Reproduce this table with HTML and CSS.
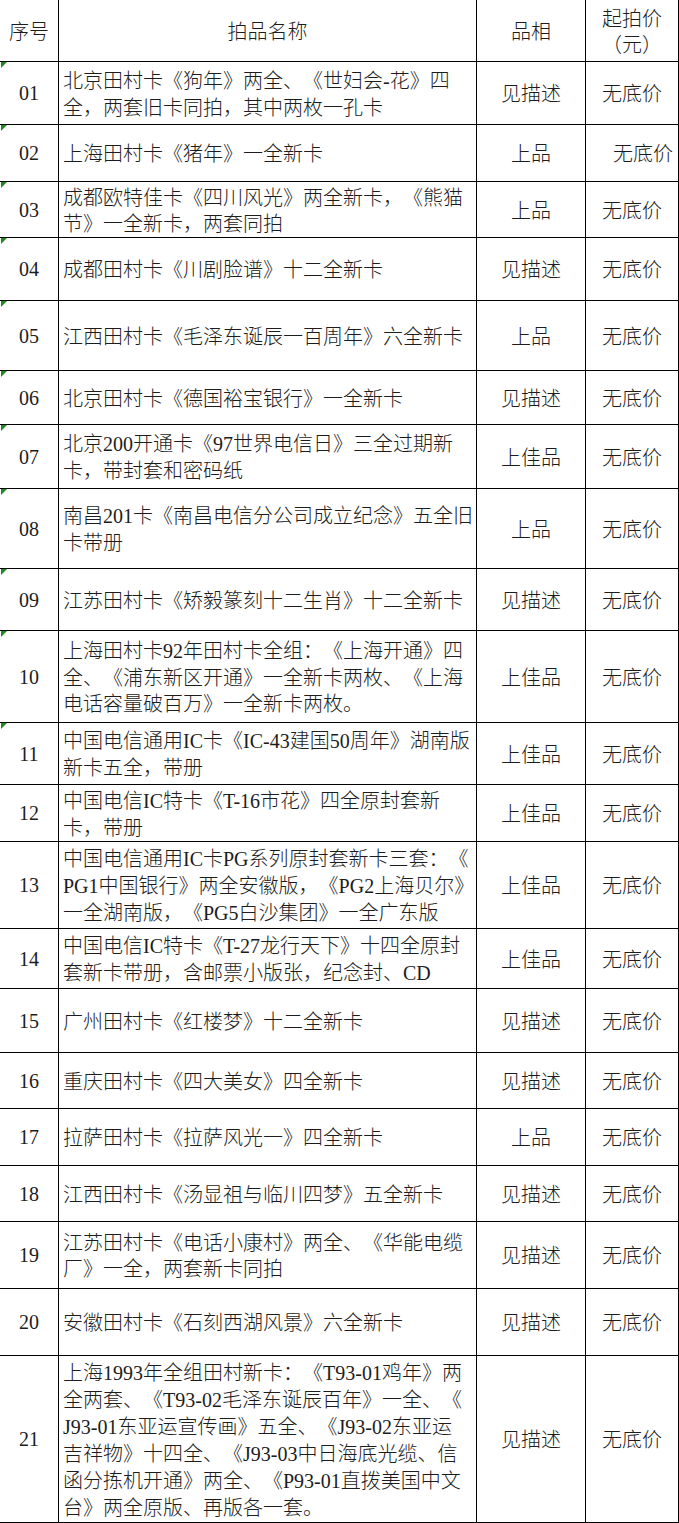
FILE: index.html
```html
<!DOCTYPE html>
<html lang="zh-CN">
<head>
<meta charset="utf-8">
<title>拍品清单</title>
<link rel="stylesheet" href="styles.css">
</head>
<body>
<div class="sheet">
  <div class="row h62 head">
    <div class="cell c-no">序号</div>
    <div class="cell c-name center">拍品名称</div>
    <div class="cell c-grade">品相</div>
    <div class="cell c-price">起拍价<br>（元）</div>
  </div>
  <div class="row h63">
    <div class="cell c-no flag">01</div>
    <div class="cell c-name">北京田村卡《狗年》两全、《世妇会<span class="lat">-</span>花》四<br>全，两套旧卡同拍，其中两枚一孔卡</div>
    <div class="cell c-grade">见描述</div>
    <div class="cell c-price">无底价</div>
  </div>
  <div class="row h57">
    <div class="cell c-no flag">02</div>
    <div class="cell c-name">上海田村卡《猪年》一全新卡</div>
    <div class="cell c-grade">上品</div>
    <div class="cell c-price shifted">无底价</div>
  </div>
  <div class="row h56">
    <div class="cell c-no flag">03</div>
    <div class="cell c-name">成都欧特佳卡《四川风光》两全新卡，《熊猫<br>节》一全新卡，两套同拍</div>
    <div class="cell c-grade">上品</div>
    <div class="cell c-price">无底价</div>
  </div>
  <div class="row h63">
    <div class="cell c-no flag">04</div>
    <div class="cell c-name">成都田村卡《川剧脸谱》十二全新卡</div>
    <div class="cell c-grade">见描述</div>
    <div class="cell c-price">无底价</div>
  </div>
  <div class="row h70">
    <div class="cell c-no flag">05</div>
    <div class="cell c-name">江西田村卡《毛泽东诞辰一百周年》六全新卡</div>
    <div class="cell c-grade">上品</div>
    <div class="cell c-price">无底价</div>
  </div>
  <div class="row h54">
    <div class="cell c-no flag">06</div>
    <div class="cell c-name">北京田村卡《德国裕宝银行》一全新卡</div>
    <div class="cell c-grade">见描述</div>
    <div class="cell c-price">无底价</div>
  </div>
  <div class="row h64">
    <div class="cell c-no flag">07</div>
    <div class="cell c-name">北京<span class="lat">200</span>开通卡《<span class="lat">97</span>世界电信日》三全过期新<br>卡，带封套和密码纸</div>
    <div class="cell c-grade">上佳品</div>
    <div class="cell c-price">无底价</div>
  </div>
  <div class="row h80">
    <div class="cell c-no flag">08</div>
    <div class="cell c-name">南昌<span class="lat">201</span>卡《南昌电信分公司成立纪念》五全旧<br>卡带册</div>
    <div class="cell c-grade">上品</div>
    <div class="cell c-price">无底价</div>
  </div>
  <div class="row h62">
    <div class="cell c-no flag">09</div>
    <div class="cell c-name">江苏田村卡《矫毅篆刻十二生肖》十二全新卡</div>
    <div class="cell c-grade">见描述</div>
    <div class="cell c-price">无底价</div>
  </div>
  <div class="row h92">
    <div class="cell c-no flag">10</div>
    <div class="cell c-name">上海田村卡<span class="lat">92</span>年田村卡全组：《上海开通》四<br>全、《浦东新区开通》一全新卡两枚、《上海<br>电话容量破百万》一全新卡两枚。</div>
    <div class="cell c-grade">上佳品</div>
    <div class="cell c-price">无底价</div>
  </div>
  <div class="row h62">
    <div class="cell c-no flag">11</div>
    <div class="cell c-name">中国电信通用<span class="lat">IC</span>卡《<span class="lat">IC-43</span>建国<span class="lat">50</span>周年》湖南版<br>新卡五全，带册</div>
    <div class="cell c-grade">上佳品</div>
    <div class="cell c-price">无底价</div>
  </div>
  <div class="row h57">
    <div class="cell c-no">12</div>
    <div class="cell c-name">中国电信<span class="lat">IC</span>特卡《<span class="lat">T-16</span>市花》四全原封套新<br>卡，带册</div>
    <div class="cell c-grade">上佳品</div>
    <div class="cell c-price">无底价</div>
  </div>
  <div class="row h87">
    <div class="cell c-no">13</div>
    <div class="cell c-name">中国电信通用<span class="lat">IC</span>卡<span class="lat">PG</span>系列原封套新卡三套：《<br><span class="lat">PG1</span>中国银行》两全安徽版，《<span class="lat">PG2</span>上海贝尔》<br>一全湖南版，《<span class="lat">PG5</span>白沙集团》一全广东版</div>
    <div class="cell c-grade">上佳品</div>
    <div class="cell c-price">无底价</div>
  </div>
  <div class="row h60">
    <div class="cell c-no">14</div>
    <div class="cell c-name">中国电信<span class="lat">IC</span>特卡《<span class="lat">T-27</span>龙行天下》十四全原封<br>套新卡带册，含邮票小版张，纪念封、<span class="lat">CD</span></div>
    <div class="cell c-grade">上佳品</div>
    <div class="cell c-price">无底价</div>
  </div>
  <div class="row h64">
    <div class="cell c-no">15</div>
    <div class="cell c-name">广州田村卡《红楼梦》十二全新卡</div>
    <div class="cell c-grade">见描述</div>
    <div class="cell c-price">无底价</div>
  </div>
  <div class="row h56">
    <div class="cell c-no">16</div>
    <div class="cell c-name">重庆田村卡《四大美女》四全新卡</div>
    <div class="cell c-grade">见描述</div>
    <div class="cell c-price">无底价</div>
  </div>
  <div class="row h57">
    <div class="cell c-no">17</div>
    <div class="cell c-name">拉萨田村卡《拉萨风光一》四全新卡</div>
    <div class="cell c-grade">上品</div>
    <div class="cell c-price">无底价</div>
  </div>
  <div class="row h56">
    <div class="cell c-no">18</div>
    <div class="cell c-name">江西田村卡《汤显祖与临川四梦》五全新卡</div>
    <div class="cell c-grade">见描述</div>
    <div class="cell c-price">无底价</div>
  </div>
  <div class="row h67">
    <div class="cell c-no">19</div>
    <div class="cell c-name">江苏田村卡《电话小康村》两全、《华能电缆<br>厂》一全，两套新卡同拍</div>
    <div class="cell c-grade">见描述</div>
    <div class="cell c-price">无底价</div>
  </div>
  <div class="row h67">
    <div class="cell c-no">20</div>
    <div class="cell c-name">安徽田村卡《石刻西湖风景》六全新卡</div>
    <div class="cell c-grade">见描述</div>
    <div class="cell c-price">无底价</div>
  </div>
  <div class="row h167">
    <div class="cell c-no">21</div>
    <div class="cell c-name">上海<span class="lat">1993</span>年全组田村新卡：《<span class="lat">T93-01</span>鸡年》两<br>全两套、《<span class="lat">T93-02</span>毛泽东诞辰百年》一全、《<br><span class="lat">J93-01</span>东亚运宣传画》五全、《<span class="lat">J93-02</span>东亚运<br>吉祥物》十四全、《<span class="lat">J93-03</span>中日海底光缆、信<br>函分拣机开通》两全、《<span class="lat">P93-01</span>直拨美国中文<br>台》两全原版、再版各一套。</div>
    <div class="cell c-grade">见描述</div>
    <div class="cell c-price">无底价</div>
  </div>
</div>
</body>
</html>
```

FILE: styles.css
```css
html, body {
  margin: 0;
  padding: 0;
  background: #ffffff;
}

.sheet {
  width: 679px;
  font-family: "Noto Sans CJK SC", "Noto Sans CJK JP", sans-serif;
  font-size: 20px;
  line-height: 26px;
  color: #1c1c1c;
  font-weight: 300;
  text-spacing-trim: space-all;
}

.lat,
.c-no {
  font-family: "Liberation Serif", "Noto Sans CJK SC", serif;
}

.head .c-no {
  font-family: "Noto Sans CJK SC", "Noto Sans CJK JP", sans-serif;
}

.row {
  display: grid;
  grid-template-columns: 59px 418px 109px 93px;
}

.h54 { height: 54px; }
.h56 { height: 56px; }
.h57 { height: 57px; }
.h60 { height: 60px; }
.h62 { height: 62px; }
.h63 { height: 63px; }
.h64 { height: 64px; }
.h67 { height: 67px; }
.h70 { height: 70px; }
.h80 { height: 80px; }
.h87 { height: 87px; }
.h92 { height: 92px; }
.h167 { height: 167px; }

.cell {
  box-sizing: border-box;
  border-right: 1px solid #000;
  border-bottom: 1px solid #000;
  display: flex;
  align-items: center;
  justify-content: center;
  text-align: center;
  white-space: nowrap;
  position: relative;
}

.c-name {
  display: block;
  align-content: center;
  text-align: left;
  padding-left: 4px;
}

.c-name.center {
  text-align: center;
  padding-left: 0;
}

.c-price.shifted {
  padding-left: 22px;
}

.flag::before {
  content: "";
  position: absolute;
  top: 0;
  left: 1px;
  width: 0;
  height: 0;
  border-top: 6px solid #1f8a1f;
  border-right: 6px solid transparent;
}
```
